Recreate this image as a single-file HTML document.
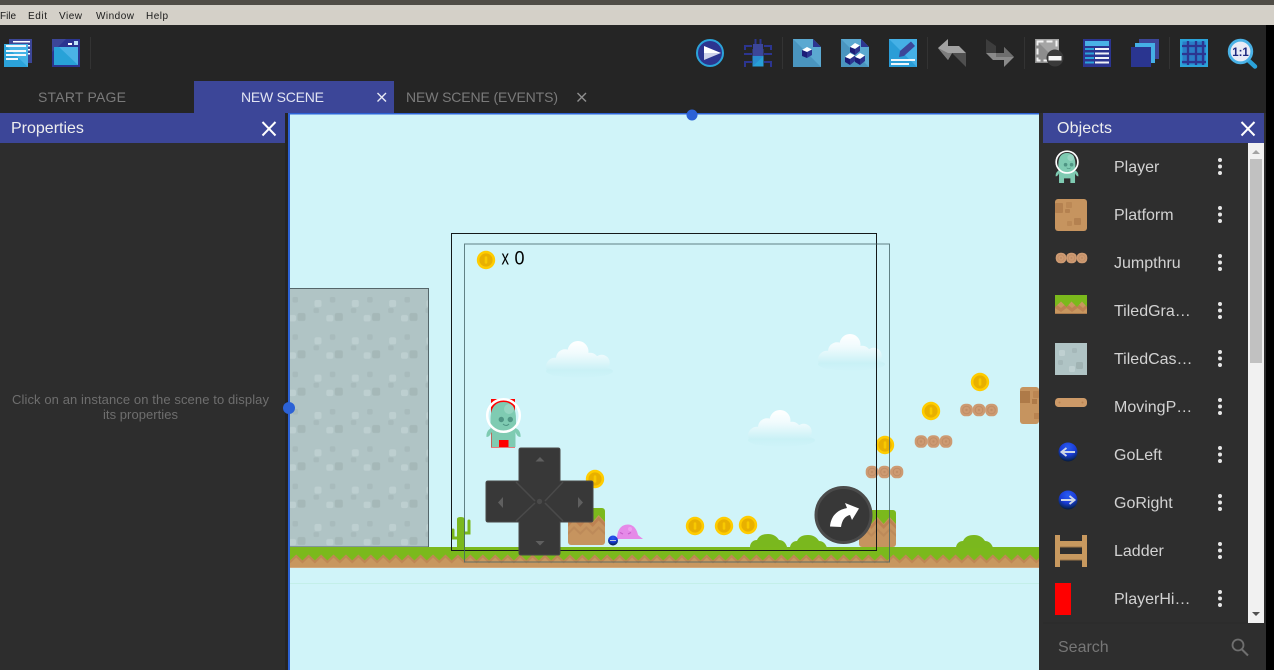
<!DOCTYPE html>
<html><head><meta charset="utf-8"><title>Scene editor</title>
<style>
html,body{margin:0;padding:0;background:#252525;width:1274px;height:670px;overflow:hidden}
svg{display:block}
text{font-family:"Liberation Sans",sans-serif}
</style></head><body>
<svg xmlns="http://www.w3.org/2000/svg" width="1274" height="670" viewBox="0 0 1274 670">
<defs>
<pattern id="castle" patternUnits="userSpaceOnUse" x="288" y="288" width="37.33" height="37.33">
<rect width="37.33" height="37.33" fill="#b0c4c5"/>
<rect x="4.5" y="9" width="5.500" height="5.500" rx="1.500" fill="#a8bbbc"/>
<rect x="26.500" y="12" width="7" height="7" rx="2" fill="#bdcfd0"/>
<rect x="1" y="27" width="7" height="6.500" rx="2" fill="#bdcfd0"/>
<rect x="9.500" y="25" width="8" height="8" rx="2" fill="#a5b8b8"/>
<rect x="25.500" y="20" width="5.500" height="5" rx="1.500" fill="#a8bbbc"/>
</pattern>
<pattern id="floor" patternUnits="userSpaceOnUse" x="290" y="547" width="12.44" height="21">
<rect width="12.44" height="21" fill="#c8975f"/>
<path d="M0 13.500L6.200 7.500L12.440 13.500V16.500L6.200 10.500L0 16.500Z" fill="#bf8754"/>
<path d="M0 0H12.440V13.500L6.200 7.500 0 13.500Z" fill="#7bb91c"/>
<rect y="20" width="12.440" height="1" fill="#d2a87c"/>
</pattern>
<pattern id="blockz" patternUnits="userSpaceOnUse" x="568" y="508" width="12.33" height="37">
<rect width="12.33" height="37" fill="#c6945f"/>
<path d="M0 15L6 8.500L12.330 15V19L6 12.500L0 19Z" fill="#bd8252"/>
<path d="M0 24L6 18L12.330 24V27L6 21L0 27Z" fill="#bd8a59"/>
<path d="M0 0H12.330V14L6 7 0 14Z" fill="#7bb91c"/>
</pattern>
<pattern id="blockz2" patternUnits="userSpaceOnUse" x="859" y="510" width="12.33" height="37">
<rect width="12.33" height="37" fill="#c6945f"/>
<path d="M0 15L6 8.500L12.330 15V19L6 12.500L0 19Z" fill="#bd8252"/>
<path d="M0 24L6 18L12.330 24V27L6 21L0 27Z" fill="#bd8a59"/>
<path d="M0 0H12.330V14L6 7 0 14Z" fill="#7bb91c"/>
</pattern>
<linearGradient id="cg" x1="0" y1="0" x2="0" y2="1">
<stop offset="0" stop-color="#fff"/><stop offset=".35" stop-color="#f0fbfd"/><stop offset=".8" stop-color="#c9f1f6"/><stop offset="1" stop-color="#cbf2f7" stop-opacity=".3"/>
</linearGradient>
<radialGradient id="ball" cx=".5" cy=".25" r=".8">
<stop offset="0" stop-color="#2a5cf0"/><stop offset=".5" stop-color="#1a3cd8"/><stop offset=".8" stop-color="#0a2a70"/><stop offset="1" stop-color="#041020"/>
</radialGradient>
<g id="coin"><circle r="9.200" fill="#ffcc00"/><circle r="6.600" fill="#e8b000"/><rect x="-1.300" y="-3.600" width="2.600" height="7.200" rx="1" fill="#f8c900"/></g>
<g id="log"><rect x="-6.300" y="-6.300" width="12.600" height="12.600" rx="5.500" fill="#cd9a72"/><circle r="3.800" fill="none" stroke="#c08d66" stroke-width="1"/><circle r="1.200" fill="#c08d66"/></g>
<g id="logs"><use href="#log" x="0"/><use href="#log" x="12.500"/><use href="#log" x="25"/></g>
<g id="cloud"><path d="M21.500 10.500a10.500 10.500 0 1 0 21 0a10.500 10.500 0 1 0 -21 0ZM10 17.300a9 9 0 1 0 18 0a9 9 0 1 0 -18 0ZM0 25.700a9 9 0 1 0 18 0a9 9 0 1 0 -18 0ZM47.700 21.700a8 8 0 1 0 16 0a8 8 0 1 0 -16 0ZM35 20.700a9 9 0 1 0 18 0a9 9 0 1 0 -18 0ZM0 30.300a33.500 6.300 0 1 0 67 0a33.500 6.300 0 1 0 -67 0ZM14 15V30H58V15Z" fill="url(#cg)"/></g>
<g id="bush"><path d="M0 13C0 9 3 6 7 6 9 2 12 0 18 0 24 0 27 3 29 6 33 6 36 9 37 13Z" fill="#7ab81e"/></g>
<g id="alien">
<path d="M490.500 419C490.500 408 495 402 503.500 402 512 402 516 408 516 419V430H490.500Z" fill="#7fcbb2"/>
<path d="M486.500 437C486 433 488 429 492 428H515C519 429 521 433 520.500 437 518 437 516.500 435 515.500 432V447H508.500V440H499V447H491.500V432C490.500 435 489 437 486.500 437Z" fill="#7fcbb2"/>
<circle cx="509" cy="409" r="5" fill="#97d6c2"/>
<circle cx="501.300" cy="419.500" r="2.700" fill="#4f9584"/><circle cx="510.300" cy="419.500" r="2.700" fill="#4f9584"/>
<path d="M503 424Q506 427 509 424" fill="none" stroke="#4f9584" stroke-width="1"/>
<circle cx="503.500" cy="415.500" r="16.300" fill="none" stroke="#fff" stroke-width="2.500"/>
</g>
</defs>

<rect width="1274" height="670" fill="#252525"/>
<rect width="1274" height="5" fill="#4f4c46"/>
<rect y="5" width="1274" height="20" fill="#d4d0c8"/>
<g font-size="10" fill="#1a1a1a">
<text x="0" y="19" textLength="16">File</text>
<text x="28" y="19" textLength="19">Edit</text>
<text x="59" y="19" textLength="23">View</text>
<text x="96" y="19" textLength="38">Window</text>
<text x="146" y="19" textLength="22">Help</text>
</g>
<rect x="1266" y="25" width="8" height="645" fill="#000"/>

<!-- toolbar -->
<g>
<rect x="9" y="39" width="23" height="24" fill="#3c4698"/>
<path d="M13 41H30V42.500H13ZM28 45H30V46.500H28ZM28 49H30V50.500H28ZM28 53H30V54.500H28Z" fill="#fff"/>
<rect x="4" y="44" width="24" height="23" fill="#2ba3da"/>
<path d="M4 44H28V67Z" fill="#45b3e6"/>
<path d="M6 45H26V47H6ZM6 50H26V52H6ZM6 54H26V56H6ZM6 58H18V60H6Z" fill="#f2f6fb"/>

<rect x="52" y="39" width="28" height="28" fill="#2b3590"/>
<path d="M52 39H66L58 47H54V50L52 52Z" fill="#3c4698"/>
<rect x="54" y="47" width="24" height="18" fill="#28a2d8"/>
<path d="M59 47H78V65Z" fill="#4ab2e6"/>
<rect x="68" y="43" width="4" height="2" fill="#fff"/><rect x="74" y="41" width="4" height="4" fill="#bde3f7"/>
<rect x="90" y="37" width="1" height="32" fill="#333"/>

<circle cx="710" cy="53" r="13" fill="#2c3590" stroke="#2ba3da" stroke-width="2"/>
<path d="M704 46L721 53H704Z" fill="#fff"/><path d="M704 53H721L704 60Z" fill="#cfd3ea"/>

<path d="M755.500 39V44M760.500 39V44M745 50V46H752M771 50V46H764M744 54H752M772 54H764M745 67V62H752M771 67V62H764" fill="none" stroke="#2c3590" stroke-width="2"/>
<rect x="753" y="44" width="10" height="6" fill="#3c4698"/>
<rect x="752.500" y="49" width="11" height="8" fill="#3c4698"/>
<rect x="752.500" y="56" width="11" height="10.500" fill="#27a0d8"/>
<path d="M752.500 56H763.500L752.500 66.500Z" fill="#2a8cce"/>
<rect x="782" y="37" width="1" height="32" fill="#333"/>

<path d="M793 39H813L821 47V67H793Z" fill="#5ba9d1"/><path d="M793 39L821 67H793Z" fill="#4a95bf"/><path d="M813 39L821 47H813Z" fill="#2c3590"/>
<path d="M802 50L807 47 812 49.500 807 52Z" fill="#fff"/><path d="M802 50L807 52V58L802 56Z" fill="#1c1d78"/><path d="M807 52L812 49.500V55L807 58Z" fill="#2c3590"/>

<path d="M841 39H861L869 47V67H841Z" fill="#5ba9d1"/><path d="M841 39L869 67H841Z" fill="#4a95bf"/><path d="M861 39L869 47H861Z" fill="#2c3590"/>
<g id="cube"><path d="M850 47L855 43 860 45.500 855 49Z" fill="#fff"/><path d="M850 47L855 49V55L850 52Z" fill="#1c1d78"/><path d="M855 49L860 45.500V51L855 55Z" fill="#2c3590"/></g>
<use href="#cube" x="-5" y="10"/><use href="#cube" x="5" y="10"/>

<rect x="889" y="39" width="28" height="28" fill="#45b0e6"/><path d="M889 39L917 67H889Z" fill="#2a9dd7"/>
<path d="M899 57L900 51 911 41.500 915 46 904 56Z" fill="#3c4698"/>
<rect x="891" y="59" width="24" height="2" fill="#eef6fb"/><rect x="891" y="63" width="18" height="2" fill="#eef6fb"/>
<rect x="927" y="37" width="1" height="32" fill="#333"/>

<path d="M938 48L948 39V46H959L966 53H952L948 60Z" fill="#a2a2a2"/><path d="M938 48L948 53H952L948 60Z" fill="#7d7d7d"/><path d="M952 53H966V67Z" fill="#4f4f4f"/>

<path d="M986 39L996 46V53H986Z" fill="#3d3d3d"/>
<path d="M986 53H1004V47L1014 57 1004 67V60H993Z" fill="#8a8a8a"/><path d="M1004 47L1014 57H996V53H1004Z" fill="#6e6e6e"/>
<rect x="1024" y="37" width="1" height="32" fill="#333"/>

<rect x="1035" y="39" width="24" height="24" fill="#8d8d8d"/><path d="M1035 39H1059V63Z" fill="#a5a5a5"/>
<rect x="1037.500" y="41.500" width="19" height="19" fill="none" stroke="#f2f2f2" stroke-width="2" stroke-dasharray="6 3"/>
<circle cx="1055" cy="58" r="8.500" fill="#3a3a3a"/><rect x="1048.500" y="56" width="13" height="4.500" fill="#f4f4f4"/>

<rect x="1083" y="39" width="28" height="28" fill="#2c3590"/>
<rect x="1085" y="41" width="24" height="5" fill="#4ab2e6"/>
<path d="M1085 48H1094V50H1085ZM1085 52.500H1094V54.500H1085ZM1085 57H1094V59H1085ZM1085 61.500H1094V63.500H1085Z" fill="#2ba3da"/>
<path d="M1095 48H1109V50H1095ZM1095 52.500H1109V54.500H1095ZM1095 57H1109V59H1095ZM1095 61.500H1109V63.500H1095Z" fill="#f0f2f8"/>

<rect x="1139" y="39" width="20" height="20" fill="#3c4698"/>
<rect x="1135" y="43" width="20" height="20" fill="#45b0e6"/>
<rect x="1131" y="47" width="20" height="20" fill="#2a3590"/>
<rect x="1169" y="37" width="1" height="32" fill="#333"/>

<rect x="1180" y="39" width="28" height="28" fill="#2ba3da"/>
<rect x="1182.500" y="41.500" width="23" height="23" fill="#2a7cc6"/>
<path d="M1188 41V65M1196 41V65M1203 41V65M1182 46H1206M1182 54H1206M1182 62H1206" stroke="#2c3590" stroke-width="2.300" fill="none"/>

<path d="M1248 60L1255 66.500" stroke="#2ba3da" stroke-width="4.500" stroke-linecap="round"/>
<circle cx="1240.500" cy="51.500" r="11.300" fill="#e8ebf6" stroke="#4ab2e6" stroke-width="2.800"/>
<text x="1240.500" y="56" font-size="11.500" font-weight="700" fill="#1f2a7f" text-anchor="middle">1:1</text>
</g>

<!-- tabs -->
<text x="38" y="102" font-size="14" fill="#7a7a7a" textLength="88">START PAGE</text>
<rect x="194" y="81" width="200" height="32" fill="#3c4698"/>
<text x="241" y="102" font-size="14" fill="#e2e4f2" textLength="83">NEW SCENE</text>
<path d="M377.500 93L386 101.500M386 93L377.500 101.500" stroke="#e8e9f4" stroke-width="1.400"/>
<text x="406" y="102" font-size="14" fill="#7a7a7a" textLength="152">NEW SCENE (EVENTS)</text>
<path d="M577.500 93L586 101.500M586 93L577.500 101.500" stroke="#909090" stroke-width="1.400"/>

<!-- left panel -->
<rect x="0" y="113" width="285" height="557" fill="#2d2d2d"/>
<rect x="0" y="113" width="285" height="30" fill="#3c4698"/>
<text x="11" y="133" font-size="16" fill="#eeeeee">Properties</text>
<path d="M262.500 122L275.500 135.500M275.500 122L262.500 135.500" stroke="#fff" stroke-width="2"/>
<g font-size="13" fill="#6e6e6e">
<text x="12" y="404" textLength="257">Click on an instance on the scene to display</text>
<text x="103" y="419" textLength="75">its properties</text>
</g>

<!-- scene -->
<rect x="288" y="113" width="752" height="557" fill="#d0f4f9"/>
<rect x="290" y="583" width="749" height="1" fill="#c3efe9"/>

<use href="#cloud" x="546" y="341"/>
<use href="#cloud" x="818" y="334"/>
<use href="#cloud" x="748" y="410"/>

<rect x="290" y="288" width="138.500" height="259" fill="url(#castle)"/>
<path d="M290 288.500H428.500V547H290" fill="none" stroke="#55666a" stroke-width="1"/>

<rect x="290" y="547" width="749" height="21" fill="url(#floor)"/>

<!-- cactus -->
<path d="M457 547V519Q457 517 461 517 465 517 465 520V547Z" fill="#7ab81e"/>
<path d="M457 538H453V530M465 533H469V521" fill="none" stroke="#7ab81e" stroke-width="3" stroke-linecap="round"/>

<use href="#bush" x="750" y="534"/>
<use href="#bush" x="790" y="535"/>
<use href="#bush" x="956" y="535"/>

<!-- blocks -->
<rect x="568" y="508" width="37" height="37" rx="3" fill="url(#blockz)"/>
<rect x="859" y="510" width="37" height="37" rx="3" fill="url(#blockz2)"/>
<g>
<rect x="1020" y="387" width="19" height="37" rx="3" fill="#c6945f"/>
<rect x="1020" y="391" width="10" height="12" fill="#ae7a48"/>
<rect x="1033" y="391" width="6" height="7" rx="1" fill="#bb8652"/>
<rect x="1032" y="399" width="5" height="5" fill="#ae7a48"/>
<rect x="1034" y="413" width="5" height="6" fill="#b98350"/>
</g>

<use href="#coin" x="595" y="479"/>
<use href="#coin" x="695" y="526"/>
<use href="#coin" x="724" y="526"/>
<use href="#coin" x="748" y="525"/>
<use href="#coin" x="885" y="445"/>
<use href="#coin" x="931" y="411"/>
<use href="#coin" x="980" y="382"/>
<use href="#coin" x="486" y="260"/>
<text x="501.500" y="264.500" font-size="20" fill="#000" textLength="7.500" lengthAdjust="spacingAndGlyphs">x</text>
<text x="514.500" y="264.500" font-size="19.500" fill="#000" textLength="10" lengthAdjust="spacingAndGlyphs">0</text>

<use href="#logs" x="872" y="472"/>
<use href="#logs" x="921" y="441.500"/>
<use href="#logs" x="966.500" y="410"/>

<!-- enemy / ball -->
<path d="M617 539C617 530 621 524.500 628 524.500 634 524.500 637 530 638 535L643 539Z" fill="#e58ae8"/>
<circle cx="630" cy="529" r="2" fill="#ee9ff0"/>
<path d="M620 532.500L623 534M628 534L631 532.500" stroke="#c65dc9" stroke-width="1.200"/>
<circle cx="613" cy="540.500" r="5" fill="url(#ball)"/>
<path d="M610 540.500H616" stroke="#b9c7da" stroke-width="1"/>

<!-- player -->
<rect x="491" y="399" width="24" height="48.500" fill="#ff0000"/>
<use href="#alien"/>

<!-- camera rectangles -->
<rect x="451.500" y="233.500" width="425" height="317" fill="none" stroke="#14191a" stroke-width="1"/>
<rect x="464.500" y="244" width="425" height="318" fill="none" stroke="#446468" stroke-width="1" opacity=".8"/>

<!-- dpad -->
<g>
<path d="M519 450Q519 448 521 448H558Q560 448 560 450V481H591Q593 481 593 483V520Q593 522 591 522H560V553Q560 555 558 555H521Q519 555 519 553V522H488Q486 522 486 520V483Q486 481 488 481H519Z" fill="#383838" stroke="#474747" stroke-width="1"/>
<path d="M516 482L535 501M563 482L545 501M516 521L535 503M563 521L545 503" stroke="#4a4a4a" stroke-width="1.500" fill="none"/>
<circle cx="539.500" cy="501.500" r="2.700" fill="#4a4a4a"/>
<path d="M535.500 461.500L540 457 544.500 461.500ZM535.500 541L540 545.500 544.500 541ZM503 497L498 502.500 503 508ZM578 497L583 502.500 578 508Z" fill="#5f5f5f"/>
</g>

<!-- jump button -->
<circle cx="843.500" cy="515" r="27.500" fill="#383838" stroke="#4b4b4b" stroke-width="3"/>
<path d="M830 526.500C831 516 837 510 847 508L845 503 859 508.500 852 520 850 515C845 516 842 520 841 527Z" fill="#fff"/>

<!-- selection -->
<rect x="288" y="113" width="2" height="557" fill="#2c62d6"/>
<rect x="288" y="113" width="751" height="1.500" fill="#2c62d6"/>
<circle cx="692" cy="115" r="5.500" fill="#2c62d6"/>
<circle cx="289" cy="408" r="6" fill="#2c62d6"/>

<!-- right panel -->
<rect x="1039" y="113" width="227" height="557" fill="#2e2e2e"/>
<rect x="1043" y="113" width="221" height="30" fill="#3c4698"/>
<text x="1057" y="133" font-size="16" fill="#eeeeee" textLength="55">Objects</text>
<path d="M1241.500 122L1254.500 135.500M1254.500 122L1241.500 135.500" stroke="#fff" stroke-width="2"/>

<rect x="1248" y="143" width="16" height="480" fill="#f1f1f1"/>
<rect x="1250" y="159" width="12" height="204" fill="#c1c1c1"/>
<path d="M1252 154L1256 150 1260 154Z" fill="#a3a3a3"/>
<path d="M1252 612H1260L1256 616Z" fill="#505050"/>

<g font-size="16" fill="#d2d2d2">
<text x="1114" y="172">Player</text>
<text x="1114" y="220">Platform</text>
<text x="1114" y="268">Jumpthru</text>
<text x="1114" y="316">TiledGra…</text>
<text x="1114" y="364">TiledCas…</text>
<text x="1114" y="412">MovingP…</text>
<text x="1114" y="460">GoLeft</text>
<text x="1114" y="508">GoRight</text>
<text x="1114" y="556">Ladder</text>
<text x="1114" y="604">PlayerHi…</text>
</g>
<g fill="#e6e6e6">
<circle cx="1220" cy="160" r="2"/><circle cx="1220" cy="166.500" r="2"/><circle cx="1220" cy="173" r="2"/>
<circle cx="1220" cy="208" r="2"/><circle cx="1220" cy="214.500" r="2"/><circle cx="1220" cy="221" r="2"/>
<circle cx="1220" cy="256" r="2"/><circle cx="1220" cy="262.500" r="2"/><circle cx="1220" cy="269" r="2"/>
<circle cx="1220" cy="304" r="2"/><circle cx="1220" cy="310.500" r="2"/><circle cx="1220" cy="317" r="2"/>
<circle cx="1220" cy="352" r="2"/><circle cx="1220" cy="358.500" r="2"/><circle cx="1220" cy="365" r="2"/>
<circle cx="1220" cy="400" r="2"/><circle cx="1220" cy="406.500" r="2"/><circle cx="1220" cy="413" r="2"/>
<circle cx="1220" cy="448" r="2"/><circle cx="1220" cy="454.500" r="2"/><circle cx="1220" cy="461" r="2"/>
<circle cx="1220" cy="496" r="2"/><circle cx="1220" cy="502.500" r="2"/><circle cx="1220" cy="509" r="2"/>
<circle cx="1220" cy="544" r="2"/><circle cx="1220" cy="550.500" r="2"/><circle cx="1220" cy="557" r="2"/>
<circle cx="1220" cy="592" r="2"/><circle cx="1220" cy="598.500" r="2"/><circle cx="1220" cy="605" r="2"/>
</g>

<!-- object icons -->
<use href="#alien" transform="translate(731.200 -115.100) scale(.667)"/>
<g>
<rect x="1055" y="199" width="32" height="32" rx="3" fill="#c6945f"/>
<rect x="1055" y="203" width="8" height="10" rx="1" fill="#b48150"/>
<rect x="1066" y="202" width="6" height="6" rx="1" fill="#bb8855"/>
<rect x="1065" y="209" width="5" height="4" rx="1" fill="#b48150"/>
<rect x="1074" y="218" width="7" height="7" rx="1" fill="#b48150"/>
<rect x="1067" y="221" width="5" height="5" rx="1" fill="#bb8855"/>
</g>
<g transform="translate(1061 258) scale(.84)"><use href="#logs" x="0" y="0"/></g>
<g>
<rect x="1055" y="295" width="32" height="19" fill="#c8975f"/>
<path d="M1055 301.500L1061 306 1066.500 301.500 1072 306 1077.500 301.500 1083 306 1087 302V306L1083 310 1077.500 306 1072 310 1066.500 306 1061 310 1055 306Z" fill="#bd8252" transform="translate(0 2)"/>
<path d="M1055 295H1087V307L1082 301.500 1077 307 1071.500 301.500 1066.500 307 1061 301.500 1055 307Z" fill="#7bb91c"/>
<rect x="1055" y="313" width="32" height="1" fill="#a97a4e"/>
</g>
<g>
<rect x="1055" y="343" width="32" height="32" fill="#b0c4c5"/>
<rect x="1059" y="350" width="6" height="6" rx="1.500" fill="#bfd0d1"/>
<rect x="1072" y="348" width="5" height="5" rx="1.500" fill="#a5b8b9"/>
<rect x="1058" y="360" width="5" height="5" rx="1.500" fill="#a5b8b9"/>
<rect x="1069" y="366" width="6" height="6" rx="1.500" fill="#bfd0d1"/>
<rect x="1076" y="362" width="7" height="7" rx="1.500" fill="#a0b3b3"/>
</g>
<g>
<rect x="1055" y="398" width="32" height="9" rx="3.500" fill="#cd9a68"/>
<circle cx="1059.500" cy="402.500" r="1" fill="#b98350"/><circle cx="1082.500" cy="402.500" r="1" fill="#b98350"/>
</g>
<circle cx="1068" cy="452" r="9.500" fill="url(#ball)"/>
<path d="M1075 452H1063M1066.500 448L1061.500 452 1066.500 456" fill="none" stroke="#cdd6e6" stroke-width="2"/>
<circle cx="1068" cy="500" r="9.500" fill="url(#ball)"/>
<path d="M1061 500H1073M1069.500 496L1074.500 500 1069.500 504" fill="none" stroke="#cdd6e6" stroke-width="2"/>
<g fill="#c8995f">
<rect x="1055" y="535" width="5" height="32"/><rect x="1082" y="535" width="5" height="32"/>
<rect x="1060" y="541" width="22" height="6"/><rect x="1060" y="554" width="22" height="6"/>
</g>
<path d="M1060 547H1082M1060 560H1082" stroke="#9c7548" stroke-width="1"/>
<rect x="1055" y="583" width="16" height="32" fill="#ff0000"/>

<!-- search -->
<rect x="1043" y="622.500" width="205" height="1" fill="#292929"/>
<text x="1058" y="652" font-size="16" fill="#777777">Search</text>
<circle cx="1238" cy="645" r="5.500" fill="none" stroke="#6f6f6f" stroke-width="1.800"/>
<path d="M1242 649.500L1248 655.500" stroke="#6f6f6f" stroke-width="2"/>
</svg>
</body></html>
